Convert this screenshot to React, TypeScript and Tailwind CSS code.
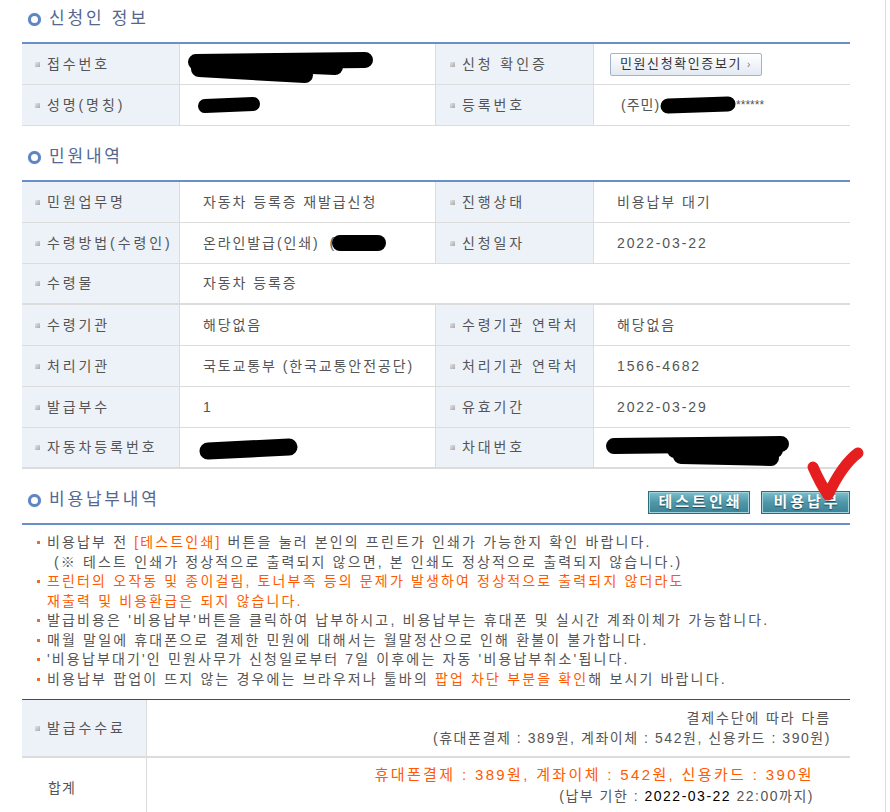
import React from 'react';

const FONT = "font-['Liberation_Sans','Noto_Sans_CJK_KR',sans-serif]";

// small gray square before each label
function Dot() {
  return <span className="mr-[7px] inline-block h-[5px] w-[5px] shrink-0 bg-gradient-to-br from-[#e6e6e6] to-[#a9a9a9]" />;
}

function Label({ children, pl = 'pl-[13px]' }: { children: React.ReactNode; pl?: string }) {
  return (
    <div className={`flex w-[158px] shrink-0 items-center border-r border-[#dcdcdc] bg-[#edf2f9] tracking-[2.9px] ${pl}`}>
      <Dot />
      <span className="whitespace-nowrap">{children}</span>
    </div>
  );
}

function Value({ children, wide }: { children?: React.ReactNode; wide?: boolean }) {
  return (
    <div
      className={`flex items-center whitespace-nowrap pl-[23px] tracking-[1.9px] ${wide ? 'flex-1' : 'w-[256px] shrink-0 border-r border-[#dcdcdc]'}`}
    >
      {children}
    </div>
  );
}

function Row({ children, thick }: { children: React.ReactNode; thick?: boolean }) {
  return (
    <div className={`flex h-[41px] ${thick ? 'border-b-2' : 'border-b'} border-[#dcdcdc]`}>{children}</div>
  );
}

function SectionTitle({ children, right }: { children: React.ReactNode; right?: React.ReactNode }) {
  return (
    <div className="mb-[4px] flex h-[38px] items-center justify-between">
      <div className="flex items-center">
        <span className="ml-[6px] mr-[8px] inline-block h-[13px] w-[13px] rounded-full border-[3px] border-[#5f86c2] bg-white shadow-[0_0_1px_#8fb0e0]" />
        <span className="text-[17px] tracking-[2.8px] text-[#55678f]">{children}</span>
      </div>
      {right}
    </div>
  );
}

// black marker strokes over private data
function Scribble({ w, h, strokes, sw }: { w: number; h: number; strokes: string[]; sw: number }) {
  return (
    <svg width={w} height={h} viewBox={`0 0 ${w} ${h}`} className="block">
      {strokes.map((d, i) => (
        <path key={i} d={d} stroke="#000" strokeWidth={sw} strokeLinecap="round" strokeLinejoin="round" fill="none" />
      ))}
    </svg>
  );
}

function TealButton({ children, w }: { children: React.ReactNode; w: string }) {
  return (
    <button
      className={`flex h-[23px] ${w} items-center justify-center border border-[#2e6b7b] bg-gradient-to-b from-[#7dbfcc] via-[#4f97a8] to-[#3b8295] pl-[3px] text-[15px] font-bold tracking-[3px] text-white shadow-[inset_0_0_0_1px_#9fd3dd] [text-shadow:0_1px_1px_#1d4a56]`}
    >
      {children}
    </button>
  );
}

function Note({ children, orange }: { children: React.ReactNode; orange?: boolean }) {
  return (
    <li className={`flex ${orange ? 'text-[#ff5a00]' : ''}`}>
      <span className="mr-[7px] mt-[8px] inline-block h-[3px] w-[3px] shrink-0 bg-[#f26a1b]" />
      <span className="whitespace-nowrap">{children}</span>
    </li>
  );
}

export default function App() {
  return (
    <div className={`${FONT} h-[812px] w-[890px] overflow-hidden bg-white text-[14px] tracking-[1px] text-[#555]`}>
      <div className="relative h-full w-[886px] border-r border-[#dedede] pl-[22px] pr-[35px]">
        {/* applicant info */}
        <SectionTitle>신청인 정보</SectionTitle>
        <div className="border-t-2 border-[#6a8fc6]">
          <Row>
            <Label>접수번호</Label>
            <Value>
              <div className="-ml-[18px] mt-[4px]">
                <Scribble w={192} h={34} sw={16} strokes={['M11 13 L180 11', 'M14 20 L120 26', 'M60 14 L150 18']} />
              </div>
            </Value>
            <Label pl="pl-[14px]">신청 확인증</Label>
            <Value wide>
              <button className="-ml-[7px] flex h-[23px] items-center rounded-[2px] border border-[#a6b2c6] bg-gradient-to-b from-white to-[#e3e9f2] px-[9px] text-[13px] tracking-[1.6px] text-[#333]">
                민원신청확인증보기
                <span className="ml-[5px] text-[10px] text-[#777]">›</span>
              </button>
            </Value>
          </Row>
          <Row>
            <Label>성명(명칭)</Label>
            <Value>
              <div className="-ml-[6px]">
                <Scribble w={64} h={18} sw={14} strokes={['M8 10 L56 8']} />
              </div>
            </Value>
            <Label pl="pl-[14px]">등록번호</Label>
            <Value wide>
              <span className="ml-[4px] tracking-[1px]">(주민)</span>
              <Scribble w={76} h={20} sw={15} strokes={['M8 11 L68 9']} />
              <span className="text-[12px] tracking-[0px]">******</span>
            </Value>
          </Row>
        </div>

        {/* civil request details */}
        <div className="mt-[12px]">
          <SectionTitle>민원내역</SectionTitle>
        </div>
        <div className="border-t-2 border-[#6a8fc6]">
          <Row>
            <Label>민원업무명</Label>
            <Value>자동차 등록증 재발급신청</Value>
            <Label pl="pl-[14px]">진행상태</Label>
            <Value wide>비용납부 대기</Value>
          </Row>
          <Row>
            <Label>수령방법(수령인)</Label>
            <Value>
              온라인발급(인쇄)
              <span className="ml-[10px] flex items-center">
                (
                <span className="-ml-[5px]">
                  <Scribble w={56} h={20} sw={16} strokes={['M9 10 L47 10']} />
                </span>
              </span>
            </Value>
            <Label pl="pl-[14px]">신청일자</Label>
            <Value wide>2022-03-22</Value>
          </Row>
          <Row thick>
            <Label>수령물</Label>
            <Value wide>자동차 등록증</Value>
          </Row>
          <Row>
            <Label>수령기관</Label>
            <Value>해당없음</Value>
            <Label pl="pl-[14px]">수령기관 연락처</Label>
            <Value wide>해당없음</Value>
          </Row>
          <Row>
            <Label>처리기관</Label>
            <Value>국토교통부 (한국교통안전공단)</Value>
            <Label pl="pl-[14px]">처리기관 연락처</Label>
            <Value wide>1566-4682</Value>
          </Row>
          <Row>
            <Label>발급부수</Label>
            <Value>1</Value>
            <Label pl="pl-[14px]">유효기간</Label>
            <Value wide>2022-03-29</Value>
          </Row>
          <Row thick>
            <Label>자동차등록번호</Label>
            <Value>
              <div className="-ml-[4px] mt-[2px]">
                <Scribble w={100} h={24} sw={17} strokes={['M9 14 L90 10']} />
              </div>
            </Value>
            <Label pl="pl-[14px]">차대번호</Label>
            <Value wide>
              <div className="-ml-[12px] mt-[8px]">
                <Scribble w={186} h={36} sw={16} strokes={['M9 12 L176 10', 'M76 22 L166 24', 'M70 16 L170 16']} />
              </div>
            </Value>
          </Row>
        </div>

        {/* payment */}
        <div className="mt-[12px]">
          <SectionTitle
            right={
              <div className="flex gap-[11px] pt-[5px]">
                <TealButton w="w-[102px]">테스트인쇄</TealButton>
                <TealButton w="w-[89px]">비용납부</TealButton>
              </div>
            }
          >
            비용납부내역
          </SectionTitle>
        </div>
        <ul className="border-t-2 border-[#6a8fc6] pb-[10px] pl-[15px] pt-[8px] text-[14px] leading-[19.5px] tracking-[2.15px]">
          <Note>
            <>
              비용납부 전 <span className="text-[#ff5a00]">[테스트인쇄]</span> 버튼을 눌러 본인의 프린트가 인쇄가 가능한지 확인 바랍니다.
              <br />
              <span className="ml-[7px]">(※ 테스트 인쇄가 정상적으로 출력되지 않으면, 본 인쇄도 정상적으로 출력되지 않습니다.)</span>
            </>
          </Note>
          <Note orange>
            <>
              프린터의 오작동 및 종이걸림, 토너부족 등의 문제가 발생하여 정상적으로 출력되지 않더라도
              <br />
              재출력 및 비용환급은 되지 않습니다.
            </>
          </Note>
          <Note>발급비용은 '비용납부'버튼을 클릭하여 납부하시고, 비용납부는 휴대폰 및 실시간 계좌이체가 가능합니다.</Note>
          <Note>매월 말일에 휴대폰으로 결제한 민원에 대해서는 월말정산으로 인해 환불이 불가합니다.</Note>
          <Note>'비용납부대기'인 민원사무가 신청일로부터 7일 이후에는 자동 '비용납부취소'됩니다.</Note>
          <Note>
            <>
              비용납부 팝업이 뜨지 않는 경우에는 브라우저나 툴바의 <span className="text-[#ff5a00]">팝업 차단 부분을 확인</span>해 보시기 바랍니다.
            </>
          </Note>
        </ul>

        {/* fee */}
        <div className="border-t border-[#ff0000]">
          <div className="flex h-[58px] border-b-2 border-[#dcdcdc]">
            <div className="flex w-[125px] shrink-0 items-center border-r border-[#dcdcdc] bg-[#edf2f9] pl-[13px] tracking-[2.9px]">
              <Dot />
              <span>발급수수료</span>
            </div>
            <div className="flex flex-1 flex-col items-end justify-center whitespace-nowrap pr-[19px] text-[14px] leading-[20px] tracking-[1.55px]">
              <div className="tracking-[1.9px]">결제수단에 따라 다름</div>
              <div>(휴대폰결제 : 389원, 계좌이체 : 542원, 신용카드 : 390원)</div>
            </div>
          </div>
          <div className="flex h-[60px]">
            <div className="flex w-[125px] shrink-0 items-center border-r border-[#dcdcdc] pl-[26px]">합계</div>
            <div className="flex flex-1 flex-col items-end whitespace-nowrap pr-[36px] pt-[6px]">
              <div className="text-[15px] leading-[22px] tracking-[2.35px] text-[#ff5a00]">
                휴대폰결제 : 389원, 계좌이체 : 542원, 신용카드 : 390원
              </div>
              <div className="text-[14px] leading-[20px] tracking-[1.5px]">
                (납부 기한 : <span className="text-black">2022-03-22</span> 22:00까지)
              </div>
            </div>
          </div>
        </div>

        {/* red check drawn over the pay button */}
        <svg className="absolute left-[800px] top-[443px]" width="70" height="62" viewBox="0 0 70 62">
          <path d="M13 24 Q20 40 28 52 Q42 22 58 10" stroke="#e51f1f" strokeWidth="11" strokeLinecap="round" strokeLinejoin="round" fill="none" />
        </svg>
      </div>
    </div>
  );
}
